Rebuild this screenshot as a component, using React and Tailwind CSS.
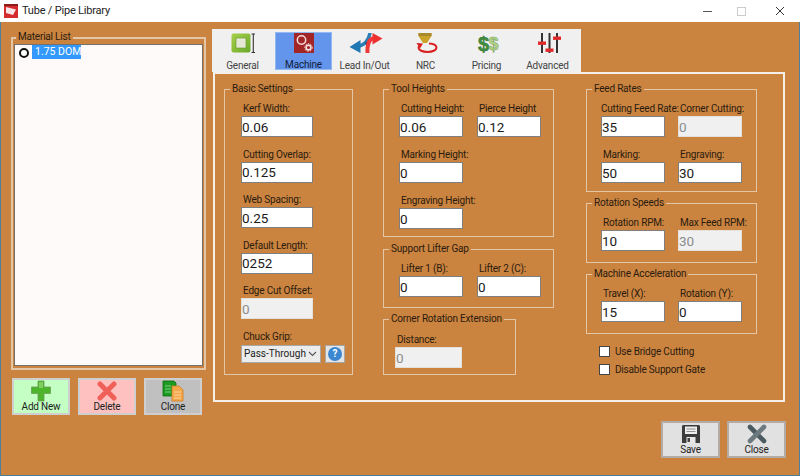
const FONT = "font-['Roboto','Liberation_Sans',Arial,sans-serif]";
const SMALL = "text-[10px] leading-[14px] tracking-[-0.2px]";

function GroupBox({ title, className = "", titleClass = "left-[5px] top-[-8px]", children }) {
  return (
    <div className={`relative border-[#e3c6a6] ${className || ""}`}>
      <span className={`absolute bg-[#cb8340] px-[2px] whitespace-nowrap text-[#2a1c0e] ${SMALL} ${titleClass}`}>
        {title}
      </span>
      {children}
    </div>
  );
}

function Field({ label, value, width = "w-[64px]", disabled, inset = "pl-[2px]" }) {
  return (
    <div className={`flex flex-col ${width}`}>
      <label className={`h-[14px] whitespace-nowrap text-[#2a1c0e] ${SMALL} ${inset}`}>
        {label}
      </label>
      <input
        readOnly
        value={value}
        className={
          disabled
            ? "h-[21px] w-full border border-[#e4e0dc] bg-[#f0f0f0] pr-[1px] text-[13.5px] text-[#8c8c8c] outline-none"
            : "h-[21px] w-full border border-[#7f7f7f] bg-white pr-[1px] text-[13.5px] text-[#1a1a1a] outline-none"
        }
      />
    </div>
  );
}

function GeneralIcon() {
  return (
    <svg width="44" height="22" viewBox="0 0 44 22">
      <defs>
        <linearGradient id="gen" x1="0" y1="0" x2="1" y2="1">
          <stop offset="0" stopColor="#a8d048" />
          <stop offset="1" stopColor="#6aa82a" />
        </linearGradient>
      </defs>
      <rect x="10.500" y="0.500" width="19" height="19" rx="2" fill="url(#gen)" />
      <rect x="15" y="5" width="10" height="10" fill="#e4e8d4" stroke="#5d9426" strokeWidth="0.6" />
      <path d="M30.500 1h3.500M32.300 1v18M30.500 19.500h3.500" stroke="#333" strokeWidth="1.100" fill="none" />
    </svg>
  );
}

function MachineIcon() {
  return (
    <svg width="44" height="22" viewBox="0 0 44 22">
      <rect x="12" y="0" width="20" height="20" fill="#a32626" />
      <circle cx="19.500" cy="7" r="4.200" fill="none" stroke="#f4dede" strokeWidth="1.500" />
      <circle cx="26.500" cy="14.500" r="2.400" fill="none" stroke="#f4dede" strokeWidth="1.600" />
      <circle cx="26.500" cy="14.500" r="3.800" fill="none" stroke="#f4dede" strokeWidth="1" strokeDasharray="1.400 1.400" />
    </svg>
  );
}

function LeadIcon() {
  return (
    <svg width="44" height="22" viewBox="0 0 44 22">
      <path d="M27 0c-1 7-6 13-12 13" fill="none" stroke="#2a7fb8" strokeWidth="3.600" />
      <path d="M6.500 14l11-7v13z" fill="#1f78b4" />
      <path d="M23 9c1.500 3 1.500 6 .5 9" fill="none" stroke="#1f3f66" strokeWidth="1.600" />
      <path d="M24.500 20c-.5-8 1.500-14.500 6-14.500" fill="none" stroke="#ee3a3a" strokeWidth="4" />
      <path d="M39.500 5.500L29.500 0v11.500z" fill="#ee2f2f" />
    </svg>
  );
}

function NrcIcon() {
  return (
    <svg width="44" height="22" viewBox="0 0 44 22">
      <path d="M14.500 0h13v3l-4.500 7h-4l-4.500-7z" fill="#c9a227" />
      <path d="M14.500 0h13v3h-13z" fill="#a88a2a" />
      <path d="M25 10.600c4.500.3 7.500 2 7.500 4.200 0 2.300-4 4.200-9 4.200s-9-1.900-9-4.200c0-.8.500-1.500 1.300-2.100" fill="none" stroke="#d8201f" strokeWidth="2" />
      <path d="M12.500 10l6.500.5-3 5z" fill="#d8201f" />
    </svg>
  );
}

function PricingIcon() {
  return (
    <svg width="44" height="22" viewBox="0 0 44 22" overflow="visible">
      <text x="18.500" y="17.500" textAnchor="middle" fontFamily="Liberation Sans" fontWeight="700" fontSize="20" fill="#3f8f3c" stroke="#2f6f30" strokeWidth="0.5">$</text>
      <text x="28.500" y="17" textAnchor="middle" fontFamily="Liberation Sans" fontWeight="700" fontSize="18" fill="#b9d68c" stroke="#6f9a50" strokeWidth="0.5">$</text>
    </svg>
  );
}

function AdvancedIcon() {
  return (
    <svg width="44" height="22" viewBox="0 0 44 22">
      <path d="M16 0v20M23.500 0v20M31 0v20" stroke="#333" strokeWidth="2" />
      <rect x="12" y="8.500" width="8" height="3.400" fill="#e02a2a" />
      <rect x="19.500" y="15.500" width="8" height="3.400" fill="#e02a2a" />
      <rect x="27" y="3.500" width="8" height="3.400" fill="#e02a2a" />
    </svg>
  );
}

function AddIcon() {
  return (
    <svg width="22" height="22" viewBox="0 0 22 22">
      <path d="M8 1h6v6h6.500v6.500H14V21H8v-7.500H1.500V7H8z" fill="#4cb52a" stroke="#6c9a58" strokeWidth="0.8" />
      <path d="M9 2h4v6H9z" fill="#7fd060" />
    </svg>
  );
}

function DeleteIcon() {
  return (
    <svg width="20" height="20" viewBox="0 0 20 20">
      <path d="M3 3l14 14M17 3L3 17" stroke="#ee6058" strokeWidth="5" strokeLinecap="round" />
    </svg>
  );
}

function CloneIcon() {
  return (
    <svg width="22" height="22" viewBox="0 0 22 22">
      <path d="M1 1h11l2 2v13H1z" fill="#1c9a22" stroke="#0f6a14" strokeWidth="0.8" />
      <path d="M3 6h6M3 9h6M3 12h6" stroke="#9bdc9e" strokeWidth="0.8" />
      <path d="M10 6h7l4 4v11H10z" fill="#f5a84a" stroke="#d27d1e" strokeWidth="0.8" />
      <path d="M12 12h7M12 15h7M12 18h7" stroke="#fbe0ba" strokeWidth="0.8" />
    </svg>
  );
}

function SaveIcon() {
  return (
    <svg width="20" height="20" viewBox="0 0 20 20">
      <path d="M2 1h16l1 1v17H1V2z" fill="#3c3c3c" />
      <rect x="4" y="2.500" width="12" height="7.500" fill="#eeeeee" />
      <path d="M5.500 5h9M5.500 7.500h9" stroke="#777" strokeWidth="0.8" />
      <rect x="5.500" y="13" width="9" height="6" fill="#e8e8e8" />
      <rect x="6.500" y="14" width="2.500" height="4" fill="#444" />
    </svg>
  );
}

function CloseIcon() {
  return (
    <svg width="20" height="20" viewBox="0 0 20 20">
      <path d="M3 3l14 14" stroke="#4a5a60" strokeWidth="4.600" strokeLinecap="round" />
      <path d="M17 3L3 17" stroke="#6c7a80" strokeWidth="4.600" strokeLinecap="round" />
    </svg>
  );
}

const TABS = [
  { label: "General", Icon: GeneralIcon },
  { label: "Machine", Icon: MachineIcon, active: true },
  { label: "Lead In/Out", Icon: LeadIcon },
  { label: "NRC", Icon: NrcIcon },
  { label: "Pricing", Icon: PricingIcon },
  { label: "Advanced", Icon: AdvancedIcon },
];

function Tab({ label, Icon, active }) {
  return (
    <div
      className={`flex h-[38px] w-[57px] flex-col items-center ${
        active ? "border border-[#94b8f0] bg-[#6495ed] text-[#10203a]" : "pt-[1px] text-[#444444]"
      }`}
    >
      <div className="h-[22px] shrink-0">
        <Icon />
      </div>
      <span className={`whitespace-nowrap ${SMALL} ${active ? "mt-[3px]" : "mt-[4px]"}`}>
        {label}
      </span>
    </div>
  );
}

function ActionButton({ label, bg, icon, border = "border-[#cfcfcf]" }) {
  return (
    <button type="button" className={`flex flex-col items-center border-2 ${border} ${bg}`}>
      <span className="flex h-[21px] items-center">{icon}</span>
      <span className="text-[10px] leading-[12px] tracking-[-0.2px] text-[#222222]">{label}</span>
    </button>
  );
}

export default function App() {
  return (
    <div className={`flex h-[476px] w-[800px] flex-col overflow-hidden bg-[#cb8340] ${FONT}`}>
      <div className="flex h-[22px] items-center bg-white pl-[4px]">
        <svg width="14" height="14" viewBox="0 0 14 14">
          <rect width="14" height="14" fill="#d42c2c" />
          <path d="M2 3l10 2.500-3 5.500-7-2z" fill="#f8e4e4" />
          <rect x="0" y="0" width="14" height="2" fill="#8c1c1c" />
        </svg>
        <span className="ml-[4px] text-[11px] tracking-[-0.2px] text-[#222222]">Tube / Pipe Library</span>
        <div className="ml-auto flex items-center">
          <span className="h-[1px] w-[9px] bg-[#555555]" />
          <span className="ml-[25px] h-[9px] w-[9px] border border-[#cccccc]" />
          <svg className="ml-[29px] mr-[15px]" width="10" height="10" viewBox="0 0 10 10">
            <path d="M1 1l8 8M9 1l-8 8" stroke="#333" strokeWidth="1" />
          </svg>
        </div>
      </div>

      <div className="flex min-h-0 flex-1 border-x border-b border-[#4a7fa0]">
        <div className="ml-[10px] flex w-[195px] flex-col pt-[15px]">
          <GroupBox
            title="Material List"
            titleClass="left-[3px] top-[-9px]"
            className="h-[333px] border-2 border-[#dcb48c] px-[1px] pb-[2px] pt-[5px]"
          >
            <div className="flex h-full items-start border border-[#76706a] bg-[#fffafa] pl-[4px]">
              <span className="mt-[3px] h-[10px] w-[10px] rounded-full border-2 border-[#111111] bg-white" />
              <span className="ml-[3px] w-[49px] bg-[#3399ff] pl-[3px] text-[10.5px] leading-[14px] whitespace-nowrap text-white">1.75 DOM</span>
            </div>
          </GroupBox>
          <div className="mt-[8px] grid h-[36px] w-[190px] grid-cols-[58px_58px_58px] gap-[8px] pl-[1px]">
            <ActionButton label="Add New" bg="bg-[#c4ffc4]" icon={<AddIcon />} />
            <ActionButton label="Delete" bg="bg-[#ffc0c0]" icon={<DeleteIcon />} />
            <ActionButton label="Clone" bg="bg-[#c0c0c0]" icon={<CloneIcon />} />
          </div>
        </div>

        <div className="ml-[6px] flex w-[574px] flex-col pt-[7px]">
          <div className="flex h-[43px] w-[369px] gap-[4px] bg-[#f0f0f0] pl-[2px] pt-[3px]">
            {TABS.map((tab) => (
              <Tab key={tab.label} {...tab} />
            ))}
          </div>

          <div className="ml-[1px] flex h-[330px] w-[572px] gap-[30px] border-2 border-[#f5efe8] pl-[9px] pt-[15px]">
            <GroupBox title="Basic Settings" className="flex h-[286px] w-[129px] flex-col gap-[10.5px] border pl-[16px] pt-[12px]">
              <Field label="Kerf Width:" value="0.06" width="w-[72px]" />
              <Field label="Cutting Overlap:" value="0.125" width="w-[72px]" />
              <Field label="Web Spacing:" value="0.25" width="w-[72px]" />
              <Field label="Default Length:" value="0252" width="w-[72px]" />
              <Field label="Edge Cut Offset:" value="0" width="w-[72px]" disabled />
              <div className="flex flex-col">
                <label className={`h-[15px] pl-[2px] text-[#2a1c0e] ${SMALL}`}>Chuck Grip:</label>
                <div className="flex items-center gap-[4px]">
                  <div className="relative h-[18px] w-[80px]">
                    <select className="block h-full w-full appearance-none border border-[#a8a8a8] bg-[#ececec] pl-[2px] text-[10px] text-[#222222] outline-none">
                      <option>Pass-Through</option>
                    </select>
                    <svg className="pointer-events-none absolute right-[4px] top-[6px]" width="9" height="6" viewBox="0 0 9 6">
                      <path d="M1 1l3.500 3.500L8 1" fill="none" stroke="#555" strokeWidth="1.100" />
                    </svg>
                  </div>
                  <span className="flex h-[18px] w-[20px] items-center justify-center border border-[#a8a8a8] bg-[#e4e4e4]">
                    <span className="flex h-[14px] w-[14px] items-center justify-center rounded-full bg-[#3a86d0] text-[10px] font-bold leading-none text-white">?</span>
                  </span>
                </div>
              </div>
            </GroupBox>

            <div className="flex w-[171px] flex-col">
              <GroupBox title="Tool Heights" className="flex h-[148px] flex-col gap-[11px] border pl-[15px] pt-[12px]">
                <div className="flex gap-[14px]">
                  <Field label="Cutting Height:" value="0.06" />
                  <Field label="Pierce Height" value="0.12" />
                </div>
                <Field label="Marking Height:" value="0" />
                <Field label="Engraving Height:" value="0" />
              </GroupBox>
              <GroupBox title="Support Lifter Gap" className="mt-[12px] flex h-[59px] gap-[14px] border pl-[15px] pt-[12px]">
                <Field label="Lifter 1 (B):" value="0" />
                <Field label="Lifter 2 (C):" value="0" />
              </GroupBox>
              <GroupBox title="Corner Rotation Extension" className="mt-[11px] h-[56px] w-[133px] border pl-[11px] pt-[13px]">
                <Field label="Distance:" value="0" width="w-[67px]" disabled />
              </GroupBox>
            </div>

            <div className="ml-[2px] flex w-[171px] flex-col">
              <GroupBox title="Feed Rates" className="flex h-[103px] flex-col gap-[11px] border pl-[14px] pt-[12px]">
                <div className="flex gap-[13px]">
                  <Field label="Cutting Feed Rate:" value="35" inset="pl-0" />
                  <Field label="Corner Cutting:" value="0" disabled />
                </div>
                <div className="flex gap-[13px]">
                  <Field label="Marking:" value="50" />
                  <Field label="Engraving:" value="30" />
                </div>
              </GroupBox>
              <GroupBox title="Rotation Speeds" className="mt-[11px] flex h-[60px] gap-[13px] border pl-[14px] pt-[12px]">
                <Field label="Rotation RPM:" value="10" />
                <Field label="Max Feed RPM:" value="30" disabled />
              </GroupBox>
              <GroupBox title="Machine Acceleration" className="mt-[11px] flex h-[60px] gap-[13px] border pl-[14px] pt-[12px]">
                <Field label="Travel (X):" value="15" />
                <Field label="Rotation (Y):" value="0" />
              </GroupBox>
              <div className="mt-[12px] flex flex-col gap-[7px] pl-[13px]">
                {["Use Bridge Cutting", "Disable Support Gate"].map((text) => (
                  <div key={text} className="flex h-[11px] items-center gap-[5px]">
                    <span className="h-[11px] w-[11px] border border-[#444444] bg-white" />
                    <span className={`text-[#2a1c0e] ${SMALL}`}>{text}</span>
                  </div>
                ))}
              </div>
            </div>
          </div>

          <div className="mt-[19px] flex h-[37px] justify-end gap-[7px]">
            <div className="grid w-[59px]">
              <ActionButton label="Save" bg="bg-[#e1e1e1]" border="border-[#b4aca4]" icon={<SaveIcon />} />
            </div>
            <div className="grid w-[59px]">
              <ActionButton label="Close" bg="bg-[#e1e1e1]" border="border-[#b4aca4]" icon={<CloseIcon />} />
            </div>
          </div>
        </div>
      </div>
    </div>
  );
}
